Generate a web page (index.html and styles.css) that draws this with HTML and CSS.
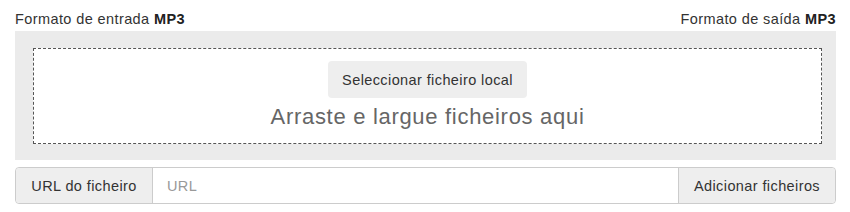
FILE: index.html
```html
<!DOCTYPE html>
<html lang="pt">

<head>
    <meta charset="UTF-8">
    <meta name="viewport" content="width=device-width, initial-scale=1.0">
    <title>Converter MP3</title>
    <link rel="stylesheet" href="styles.css">
</head>

<body>
    <div class="wrap">
        <div class="formats">
            <span>Formato de entrada <b>MP3</b></span>
            <span>Formato de saída <b>MP3</b></span>
        </div>
        <div class="upload">
            <div class="drop">
                <button class="pick">Seleccionar ficheiro local</button>
                <div class="drop_text">Arraste e largue ficheiros aqui</div>
            </div>
        </div>
        <div class="url_group">
            <span class="addon">URL do ficheiro</span>
            <input class="url_input" type="text" placeholder="URL">
            <button class="add">Adicionar ficheiros</button>
        </div>
    </div>
</body>

</html>
```

FILE: styles.css
```css
body {
    margin: 0;
    background-color: #fff;
    font-family: "Liberation Sans", Arial, sans-serif;
    color: #333;
}

.wrap {
    width: 821px;
    padding-left: 15px;
}

.formats {
    display: flex;
    justify-content: space-between;
    height: 31px;
    font-size: 14.5px;
    letter-spacing: 0.4px;
    line-height: 16px;
    padding-top: 11px;
    box-sizing: border-box;
}

.formats b {
    color: #222;
}

.upload {
    background-color: #ebebeb;
    padding: 17px 14px 16px 18px;
}

.drop {
    height: 96px;
    box-sizing: border-box;
    border: 1px dashed #555;
    background-color: #fff;
    display: flex;
    flex-direction: column;
    align-items: center;
    padding-top: 12px;
}

.pick {
    height: 37px;
    padding: 0 14px;
    font-family: inherit;
    font-size: 14.5px;
    letter-spacing: 0.4px;
    color: #333;
    background-color: #eee;
    border: none;
    border-radius: 4px;
}

.drop_text {
    margin-top: 6px;
    font-size: 22px;
    letter-spacing: 0.7px;
    color: #666;
}

.url_group {
    display: flex;
    margin-top: 7px;
    height: 37px;
    border: 1px solid #ccc;
    border-radius: 4px;
    box-sizing: border-box;
    font-size: 14.5px;
    letter-spacing: 0.4px;
}

.addon {
    width: 136px;
    display: flex;
    align-items: center;
    justify-content: center;
    background-color: #eee;
    border-right: 1px solid #ccc;
    border-radius: 4px 0 0 4px;
    color: #333;
}

.url_input {
    flex: 1;
    border: none;
    padding: 0 14px;
    font-family: inherit;
    font-size: 14.5px;
    letter-spacing: 0.4px;
    outline: none;
}

.url_input::placeholder {
    color: #999;
}

.add {
    width: 157px;
    border: none;
    border-left: 1px solid #ccc;
    border-radius: 0 4px 4px 0;
    background-color: #eee;
    font-family: inherit;
    font-size: 14.5px;
    letter-spacing: 0.4px;
    color: #333;
}
```
